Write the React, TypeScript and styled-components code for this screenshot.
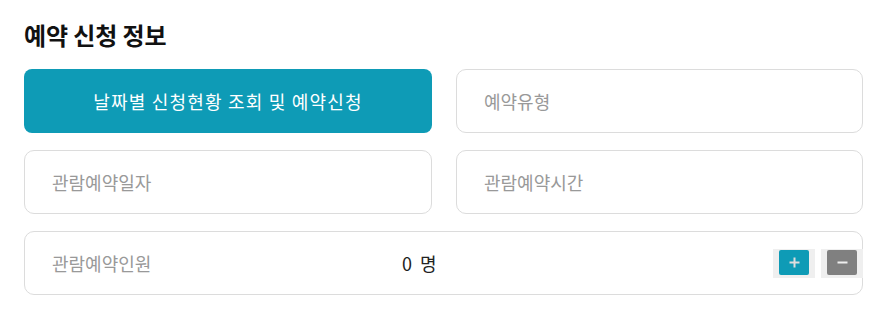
import React, { useState } from 'react';
import styled, { createGlobalStyle } from 'styled-components';

const GlobalStyle = createGlobalStyle`
  html, body {
    margin: 0;
    padding: 0;
    background: #fff;
  }

  body {
    font-family: 'Noto Sans CJK KR', 'Noto Sans', sans-serif;
    color: #222;
  }
`;

const Wrapper = styled.section`
  padding: 20px 27px 0 24px;
  width: 840px;
`;

const Title = styled.h2`
  margin: 0 0 20px;
  height: 29px;
  font-size: 24px;
  line-height: 29px;
  font-weight: 700;
  color: #111;
  letter-spacing: -0.1px;
`;

const FieldGrid = styled.div`
  display: grid;
  grid-template-columns: 408px 407px;
  column-gap: 24px;
  row-gap: 17px;
`;

const PrimaryButton = styled.button`
  height: 64px;
  border: 0;
  border-radius: 8px;
  background: #0e9bb6;
  color: #fff;
  font-family: inherit;
  font-size: 18px;
  letter-spacing: 1.2px;
  cursor: pointer;
`;

const Field = styled.div<{ $wide?: boolean }>`
  box-sizing: border-box;
  height: 64px;
  border: 1px solid #dcdcdc;
  border-radius: 10px;
  padding-left: 27px;
  display: flex;
  align-items: center;
  grid-column: ${({ $wide }) => ($wide ? '1 / -1' : 'auto')};
`;

const Placeholder = styled.span<{ $width?: number }>`
  font-size: 18px;
  color: #999;
  width: ${({ $width }) => ($width ? `${$width}px` : 'auto')};
  flex-shrink: 0;
`;

const Count = styled.span`
  font-size: 18px;
  color: #222;
  word-spacing: 4px;
`;

const Stepper = styled.div`
  margin-left: auto;
  margin-right: -1px;
  display: flex;
  gap: 6px;
`;

const StepButton = styled.button<{ $tone: 'plus' | 'minus' }>`
  box-sizing: border-box;
  width: 42px;
  height: 29px;
  padding: 1px 6px;
  border: 0;
  background: #efefef;
  cursor: pointer;
  display: flex;
  align-items: flex-start;

  span {
    width: 30px;
    height: 25px;
    border-radius: 2px;
    background: ${({ $tone }) => ($tone === 'plus' ? '#0e9bb6' : '#808080')};
    display: flex;
    align-items: center;
    justify-content: center;
  }
`;

const App = (): JSX.Element => {
  const [count, setCount] = useState(0);

  return (
    <>
      <GlobalStyle />
      <Wrapper>
        <Title>예약 신청 정보</Title>
        <FieldGrid>
          <PrimaryButton type="button">날짜별 신청현황 조회 및 예약신청</PrimaryButton>
          <Field>
            <Placeholder>예약유형</Placeholder>
          </Field>
          <Field>
            <Placeholder>관람예약일자</Placeholder>
          </Field>
          <Field>
            <Placeholder>관람예약시간</Placeholder>
          </Field>
          <Field $wide>
            <Placeholder $width={350}>관람예약인원</Placeholder>
            <Count>{count} 명</Count>
            <Stepper>
              <StepButton type="button" $tone="plus" onClick={() => setCount(count + 1)}>
                <span>
                  <svg width="11" height="11" viewBox="0 0 11 11">
                    <path d="M5.5 0.5v10M0.5 5.5h10" stroke="#ddd" strokeWidth="2" />
                  </svg>
                </span>
              </StepButton>
              <StepButton
                type="button"
                $tone="minus"
                onClick={() => setCount(Math.max(0, count - 1))}
              >
                <span>
                  <svg width="11" height="11" viewBox="0 0 11 11">
                    <path d="M0.5 5.5h10" stroke="#eee" strokeWidth="2" />
                  </svg>
                </span>
              </StepButton>
            </Stepper>
          </Field>
        </FieldGrid>
      </Wrapper>
    </>
  );
};

export default App;
